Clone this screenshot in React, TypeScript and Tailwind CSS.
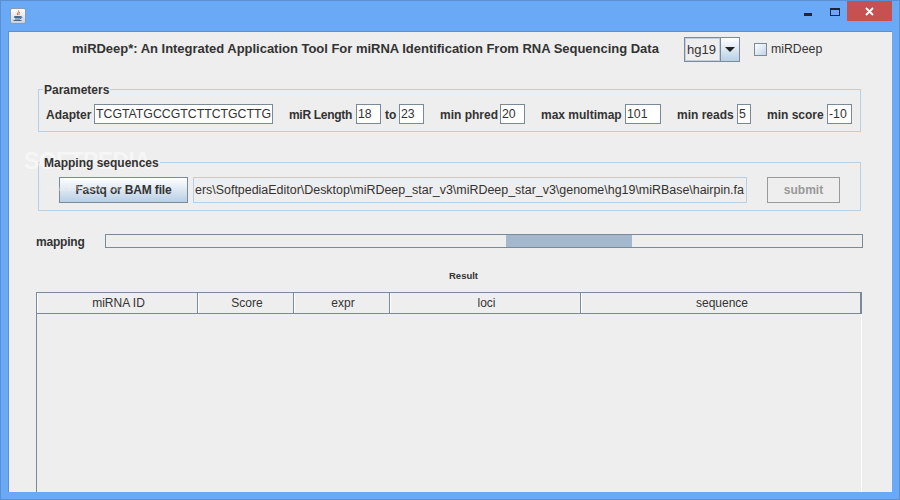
import React from 'react';

const font = { fontFamily: '"Liberation Sans", Arial, sans-serif' };

const Field = ({ value, className }: { value: string; className: string }) => (
  <div className={`h-5 bg-white border border-[#7a8a99] pl-[1px] text-[12.3px] font-normal leading-[19px] text-[#333] overflow-hidden whitespace-nowrap ${className}`}>
    {value}
  </div>
);

const Label = ({ text, className }: { text: string; className: string }) => (
  <span className={`mt-px text-[12px] font-bold text-[#333] whitespace-nowrap ${className}`}>{text}</span>
);

const GroupTitle = ({ text }: { text: string }) => (
  <span className="absolute left-[4px] -top-[8px] bg-[#eeeeee] px-[1px] text-[12px] font-bold leading-4 text-[#333]">
    <span className="relative z-10">{text}</span>
  </span>
);

const columns = [
  { name: 'miRNA ID', width: 'w-[161px]' },
  { name: 'Score', width: 'w-[96px]' },
  { name: 'expr', width: 'w-[96px]' },
  { name: 'loci', width: 'w-[191px]' },
  { name: 'sequence', width: 'flex-1' },
];

export default function App() {
  return (
    <div className="relative w-[900px] h-[500px] overflow-hidden bg-[#69a9f5] border border-[#5b8fd0] flex flex-col" style={font}>
      {/* title bar */}
      <div className="h-[30px] shrink-0 flex justify-between">
        <div className="ml-[9px] mt-[7px] w-[16px] h-[16px] rounded-[2px] border border-[#8a9bb0] bg-gradient-to-b from-white to-[#c9d3df] flex items-center justify-center">
          <svg width="12" height="12" viewBox="0 0 12 12" fill="none">
            <path d="M6.5 0.5C7.5 2 4.5 3 5.5 5" stroke="#d9652a" strokeWidth="1" />
            <path d="M8 2C6.5 3 7 4 7 5" stroke="#d9652a" strokeWidth="1" />
            <path d="M2.5 6.5H8.5V7.5H2.5ZM3 9H8M1.5 10.5H9.5" stroke="#44688f" strokeWidth="1" />
            <path d="M8.5 6.5C10.5 6 10.5 8.5 8 8.5" stroke="#44688f" strokeWidth="1" />
          </svg>
        </div>
        <div className="flex items-start">
          <div className="w-[8px] h-[3px] bg-[#1d2733] mt-[12px] mr-[18px]" />
          <div className="w-[10px] h-[8px] border border-[#1d2733] border-t-[2px] mt-[7px] mr-[7px]" />
          <div className="w-[45px] h-[20px] bg-[#c75050] flex items-center justify-center mr-[7px]">
            <svg width="9" height="9" viewBox="0 0 9 9" fill="none">
              <path d="M1 1L8 8M8 1L1 8" stroke="white" strokeWidth="1.8" />
            </svg>
          </div>
        </div>
      </div>

      {/* content */}
      <div className="mx-[7px] mb-[7px] flex-1 bg-[#eeeeee] border-t border-l border-[#5b8fd0] flex flex-col min-h-0">
        <div className="h-[30px] mt-[2px] flex items-center">
          <span className="ml-[63px] w-[612px] text-[13px] font-bold tracking-[-0.02px] text-[#333] whitespace-nowrap">
            miRDeep*: An Integrated Application Tool For miRNA Identification From RNA Sequencing Data
          </span>
          <div className="w-[56px] h-[25px] border border-[#7a8a99] flex">
            <div className="flex-1 bg-[#eeeeee] border border-[#c5d0dc] pl-[1px] text-[13px] font-normal leading-[21px] text-[#333]">hg19</div>
            <div className="w-[19px] border-l border-[#7a8a99] bg-gradient-to-b from-white to-[#b8cfe5] flex items-center justify-center">
              <div className="w-0 h-0 border-x-[5px] border-x-transparent border-t-[5px] border-t-[#222]" />
            </div>
          </div>
          <div className="ml-[14px] w-[13px] h-[13px] border border-[#7a8a99] bg-gradient-to-br from-white to-[#c0d4e8]" />
          <span className="ml-[4px] text-[12.3px] text-[#333]">miRDeep</span>
        </div>

        {/* Parameters */}
        <div className="relative ml-[29px] mt-[25px] w-[823px] h-[43px] border border-[#b8cfe4] flex items-center pt-[7px]">
          <GroupTitle text="Parameters" />
          <Label text="Adapter" className="ml-[7px] w-[48px]" />
          <Field value="TCGTATGCCGTCTTCTGCTTG" className="w-[179px]" />
          <Label text="miR Length" className="ml-[16px] w-[67px] tracking-[-0.3px]" />
          <Field value="18" className="w-[25px]" />
          <Label text="to" className="ml-[4px] w-[14px]" />
          <Field value="23" className="w-[25px]" />
          <Label text="min phred" className="ml-[16px] w-[60px]" />
          <Field value="20" className="w-[25px]" />
          <Label text="max multimap" className="ml-[16px] w-[84px]" />
          <Field value="101" className="w-[36px]" />
          <Label text="min reads" className="ml-[16px] w-[60px]" />
          <Field value="5" className="w-[14px]" />
          <Label text="min score" className="ml-[16px] w-[60px]" />
          <Field value="-10" className="w-[25px]" />
        </div>

        {/* Mapping sequences */}
        <div className="relative ml-[29px] mt-[30px] w-[823px] h-[49px] border border-[#b8cfe4] flex items-center pt-[7px]">
          <GroupTitle text="Mapping sequences" />
          <div className="relative z-10 ml-[20px] w-[129px] h-[26px] border border-[#7a8a99] bg-gradient-to-b from-white to-[#b8cfe5] text-center text-[12px] font-bold tracking-[-0.15px] leading-[25px] text-[#333]">
            Fastq or BAM file
          </div>
          <div className="ml-[5px] w-[554px] h-[26px] border border-[#b8cfe4] pl-[1px] text-[12.45px] leading-[25px] text-[#333] overflow-hidden whitespace-nowrap">
            ers\SoftpediaEditor\Desktop\miRDeep_star_v3\miRDeep_star_v3\genome\hg19\miRBase\hairpin.fa
          </div>
          <div className="ml-[20px] w-[73px] h-[26px] border border-[#999] text-center text-[12px] font-bold leading-[25px] text-[#999]">
            submit
          </div>
        </div>

        {/* progress */}
        <div className="mt-[23px] ml-[27px] h-[14px] flex items-center">
          <Label text="mapping" className="w-[69px] tracking-[-0.2px]" />
          <div className="w-[758px] h-[14px] border border-[#7a8a99] flex">
            <div className="ml-[400px] w-[126px] bg-[#a3b8cc]" />
          </div>
        </div>

        <div className="mt-[22px] ml-[440px] text-[9.5px] font-bold leading-3 text-[#333]">Result</div>

        {/* table */}
        <div className="mt-[10px] ml-[27px] w-[826px] flex-1 border-l border-[#7a8a99] border-r border-r-white min-h-0">
          <div className="h-[22px] flex border-t border-b border-[#7a8a99] -mr-px border-r-2 border-r-[#7a8a99]">
            {columns.map(c => (
              <div key={c.name} className={`${c.width} border-l border-white border-r-[1px] border-r-[#7a8a99] last:border-r-0 pl-[2px] text-center text-[12px] leading-5 text-[#333]`}>
                {c.name}
              </div>
            ))}
          </div>
        </div>
      </div>

      {/* watermark */}
      <div className="absolute z-[5] left-[23px] top-[144px] text-[23px] font-bold leading-8 tracking-[-0.6px] text-[#f6f6f6] pointer-events-none">SOFTPEDIA</div>
      <div className="absolute z-20 left-[44px] top-[181px] text-[9px] leading-3 text-[#f4f4f4] opacity-50 pointer-events-none">www.softpedia.com</div>
    </div>
  );
}
